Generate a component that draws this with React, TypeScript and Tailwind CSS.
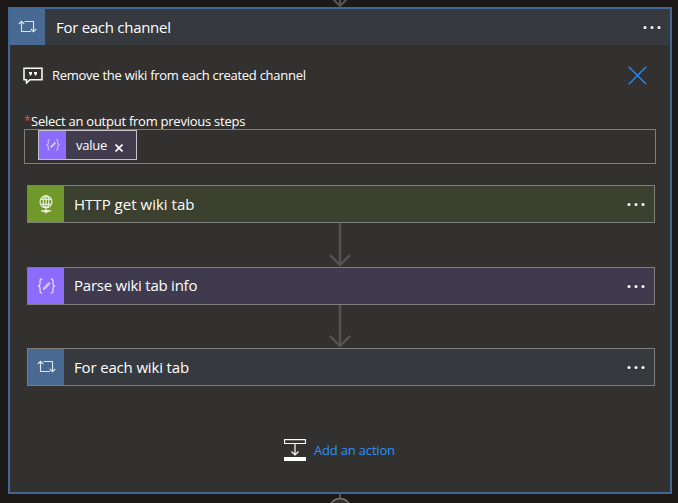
import React from "react";

function LoopIcon() {
  return (
    <svg width="19" height="14" viewBox="0 0 19 14" fill="none" stroke="#dde6f0" strokeWidth="1.1">
      <path d="M3.5 1.5V11.5H13M.8 4 3.5 1.3 6.2 4M6.5 1.5H15.5V11.5M12.8 9 15.5 11.8 18.2 9" />
    </svg>
  );
}

function BracesIcon({ size = 19 }: { size?: number }) {
  return (
    <svg width={size} height={size * 0.84} viewBox="0 0 19 16" fill="none" stroke="#e9e2ff" strokeWidth="1.2">
      <path d="M5.2.8C3.4.8 3 1.5 3 3v2.5C3 7 2.4 8 .8 8 2.4 8 3 9 3 10.5V13c0 1.5.4 2.2 2.2 2.2M13.8.8C15.6.8 16 1.5 16 3v2.5C16 7 16.6 8 18.2 8 16.6 8 16 9 16 10.5V13c0 1.5-.4 2.2-2.2 2.2" />
      <path d="m6.2 11.7.7-2.2 4.4-4.6q.8-.6 1.4 0t0 1.4l-4.4 4.5z" strokeWidth=".8" fill="#c8b6ff" />
    </svg>
  );
}

function GlobeIcon() {
  return (
    <svg width="14" height="19" viewBox="0 0 14 19" fill="none" stroke="#f5f8ee" strokeWidth="1.1">
      <circle cx="7" cy="6.8" r="6" />
      <ellipse cx="7" cy="6.8" rx="2.8" ry="6" />
      <path d="M1.7 4.3h10.6M1.7 9.3h10.6M7 .8v15M2 15.9h10" />
      <path d="M4.5 16.2h5" strokeWidth="2" />
      <path d="M6 17.7h2" />
    </svg>
  );
}

function Dots() {
  return (
    <svg width="18" height="3" viewBox="0 0 18 3" fill="#fff">
      <circle cx="2" cy="1.5" r="1.5" />
      <circle cx="9" cy="1.5" r="1.5" />
      <circle cx="16" cy="1.5" r="1.5" />
    </svg>
  );
}

function Connector({ height }: { height: string }) {
  return (
    <div className={`flex items-end justify-center overflow-hidden ${height}`}>
      <svg className="shrink-0" width="24" height="44" viewBox="0 0 24 44" fill="none" stroke="#545352" strokeWidth="2.4">
        <path d="M11 0V42M1 32 11 42 21 32" />
      </svg>
    </div>
  );
}

function Card({ title, text, icon, iconBg, bg }: {
  title: string; text: string; icon: React.ReactNode; iconBg: string; bg: string;
}) {
  return (
    <div className={`flex h-[38px] items-center border border-[#807e7c] pr-[9px] ${bg}`}>
      <div className={`flex h-full w-9 items-center justify-center ${iconBg}`}>{icon}</div>
      <span className={`ml-[10px] flex-1 whitespace-nowrap text-[15px] leading-5 ${text}`}>{title}</span>
      <Dots />
    </div>
  );
}

export default function App() {
  return (
    <div className="flex h-[503px] w-[678px] flex-col overflow-hidden bg-[#1a1917] pl-2 font-['Open_Sans','Noto_Sans',sans-serif] text-white">
      <div className="flex h-[7px] w-[664px] shrink-0 justify-center">
        <svg width="24" height="7" viewBox="0 0 24 7" fill="none" stroke="#545352" strokeWidth="2.2">
          <path d="M12 0V6M5 -1 12 6 19 -1" />
        </svg>
      </div>
      <div className="h-[487px] w-[664px] shrink-0 border-2 border-[#436795] bg-[#32312f]">
        <div className="flex h-9 items-center bg-[#363a3f] pr-[9px]">
          <div className="flex h-full w-[35px] items-center justify-center bg-[#486991]"><LoopIcon /></div>
          <span className="ml-[11px] flex-1 text-[15px] leading-5 tracking-[-0.28px]">For each channel</span>
          <Dots />
        </div>
        <div className="flex h-[60px] items-center pl-[13px] pr-[23px]">
          <svg width="20" height="17" viewBox="0 0 20 17" fill="none" stroke="#fff" strokeWidth="1.5">
            <path d="M1 1.2H19V12.8H7L3.5 16V12.8H1Z" />
            <path d="M6 5h3v2L7.8 8.6H6.5L7 7H6zM11 5h3v2l-1.2 1.6h-1.3L12 7h-1z" fill="#fff" stroke="none" />
          </svg>
          <span className="ml-[9px] flex-1 pt-[2px] text-[13px] tracking-[-0.27px]">Remove the wiki from each created channel</span>
          <svg width="19" height="19" viewBox="0 0 19 19" stroke="#2489f4" strokeWidth="1.4"><path d="m.8.8 17.4 17.4M18.2.8.8 18.2" /></svg>
        </div>
        <div className="flex h-[24px] items-end pl-[14px]">
          <span className="w-[7px] text-[12px] leading-4 text-[#e65252]">*</span>
          <span className="text-[13px] leading-4 tracking-[-0.25px]">Select an output from previous steps</span>
        </div>
        <div className="ml-[14px] flex h-[35px] w-[632px] border border-[#807e7c] pl-[13px]">
          <div className="flex h-[30px] w-[99px] items-center border border-[#c5c2ca] bg-[#413b4e]">
            <div className="flex h-full w-[27px] items-center justify-center bg-[#8c6cff]"><BracesIcon size={14} /></div>
            <span className="ml-[10px] pt-px text-[13px] tracking-[-0.25px]">value</span>
            <svg className="ml-[8px] mt-[5px]" width="8" height="8" viewBox="0 0 8 8" stroke="#fff" strokeWidth="1.6"><path d="m.5.5 7 7M7.5.5l-7 7" /></svg>
          </div>
        </div>
        <div className="ml-[17px] mt-[21px] w-[628px]">
          <Card title="HTTP get wiki tab" text="tracking-[0.02px]" icon={<GlobeIcon />} iconBg="bg-[#70982b]" bg="bg-[#3c402e]" />
          <Connector height="h-[44px]" />
          <Card title="Parse wiki tab info" text="tracking-[-0.24px] pb-[2px]" icon={<BracesIcon />} iconBg="bg-[#8c6cff]" bg="bg-[#403a4e]" />
          <Connector height="h-[43px]" />
          <Card title="For each wiki tab" text="tracking-[-0.16px]" icon={<LoopIcon />} iconBg="bg-[#486991]" bg="bg-[#363a3f]" />
        </div>
        <div className="ml-[274px] mt-[52px] flex h-6 items-center">
          <svg width="22" height="22" viewBox="0 0 22 22" fill="none" stroke="#fff">
            <path d="M.5.7H21.5V4.5H.5ZM11 5V16M7.5 12.5 11 16 14.5 12.5" strokeWidth="1.2" />
            <path d="M0 18h22v4H0z" fill="#fff" stroke="none" />
          </svg>
          <span className="ml-2 pt-[2px] text-[13px] tracking-[-0.18px] text-[#2b90fa]">Add an action</span>
        </div>
      </div>
      <div className="flex h-[9px] w-[664px] shrink-0 justify-center">
        <svg width="26" height="9" viewBox="0 0 26 9" fill="#32312f" stroke="#777573" strokeWidth="1.5">
          <path d="M13 0V5" stroke="#545352" strokeWidth="2" />
          <circle cx="13" cy="15" r="10.5" />
        </svg>
      </div>
    </div>
  );
}
